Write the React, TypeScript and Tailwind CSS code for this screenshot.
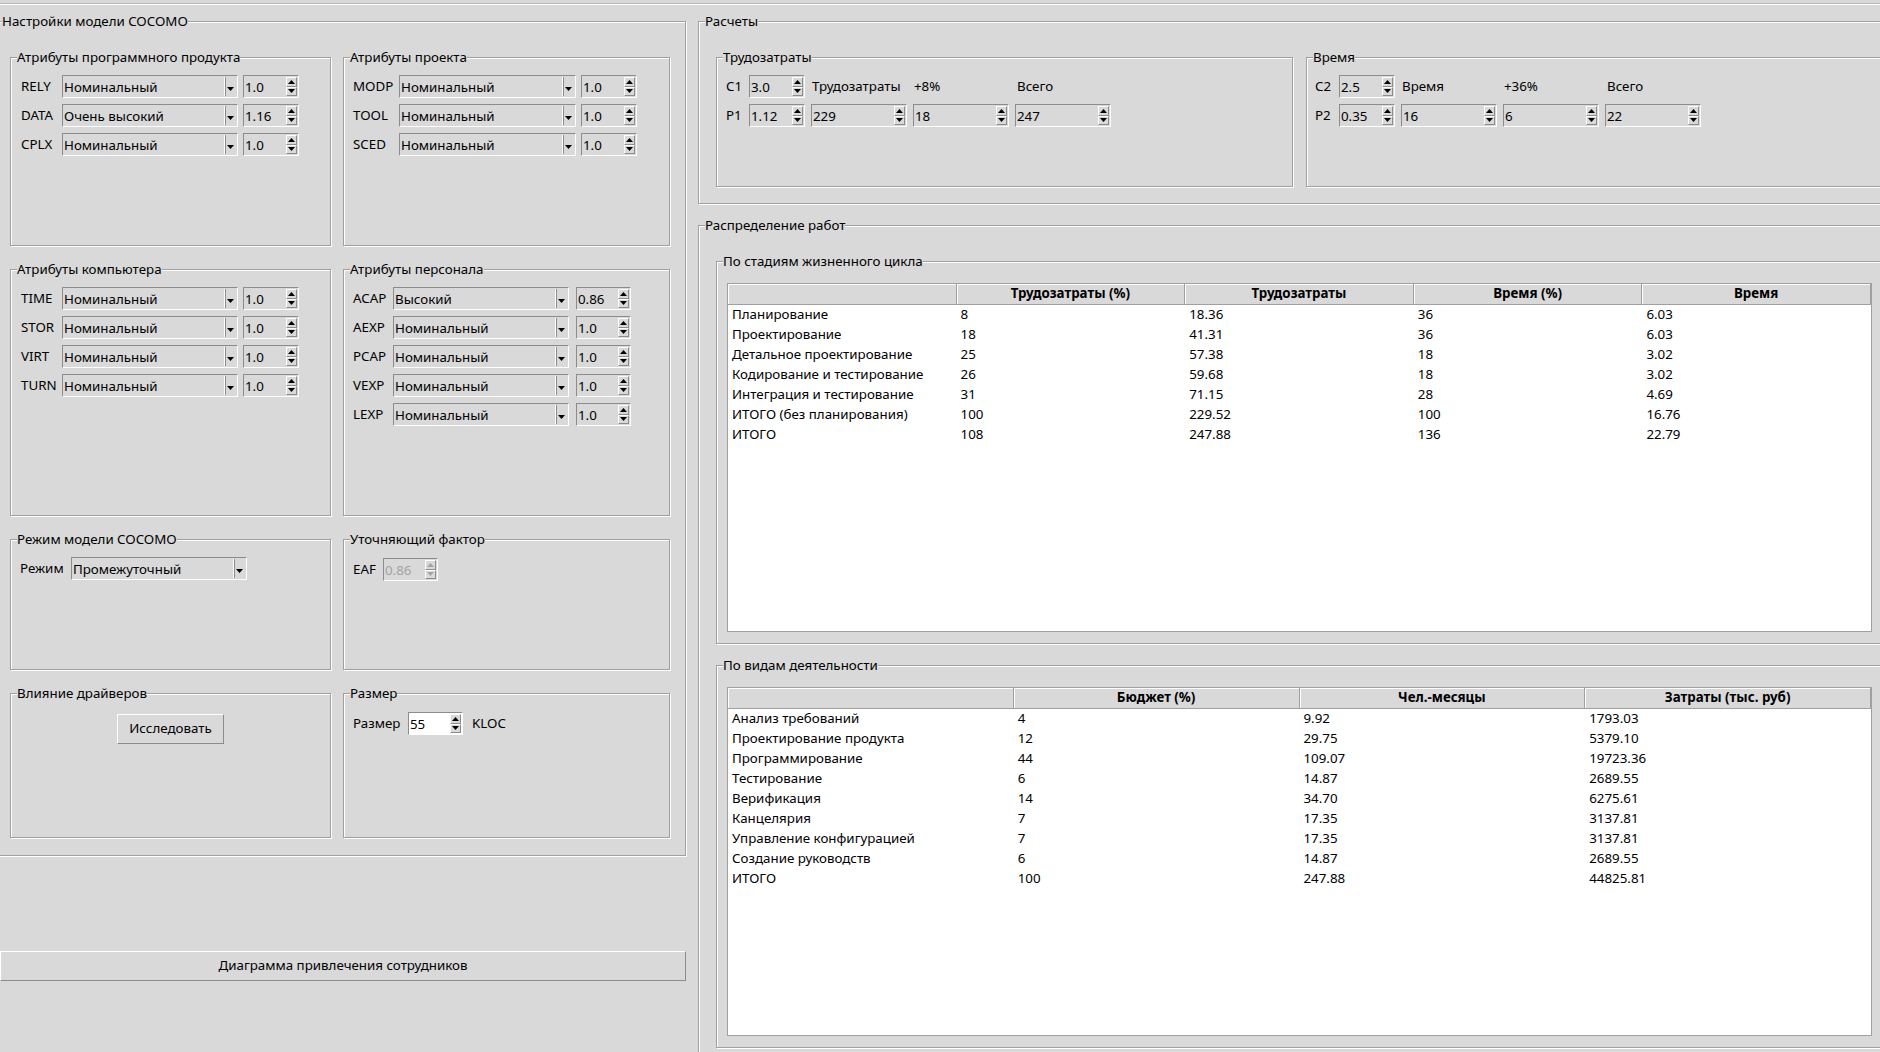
import React from 'react';

const stageRows = [
  ['Планирование', '8', '18.36', '36', '6.03'],
  ['Проектирование', '18', '41.31', '36', '6.03'],
  ['Детальное проектирование', '25', '57.38', '18', '3.02'],
  ['Кодирование и тестирование', '26', '59.68', '18', '3.02'],
  ['Интеграция и тестирование', '31', '71.15', '28', '4.69'],
  ['ИТОГО (без планирования)', '100', '229.52', '100', '16.76'],
  ['ИТОГО', '108', '247.88', '136', '22.79'],
];

const activityRows = [
  ['Анализ требований', '4', '9.92', '1793.03'],
  ['Проектирование продукта', '12', '29.75', '5379.10'],
  ['Программирование', '44', '109.07', '19723.36'],
  ['Тестирование', '6', '14.87', '2689.55'],
  ['Верификация', '14', '34.70', '6275.61'],
  ['Канцелярия', '7', '17.35', '3137.81'],
  ['Управление конфигурацией', '7', '17.35', '3137.81'],
  ['Создание руководств', '6', '14.87', '2689.55'],
  ['ИТОГО', '100', '247.88', '44825.81'],
];

type Attr = { code: string; level: string; value: string };

const productAttrs: Attr[] = [
  { code: 'RELY', level: 'Номинальный', value: '1.0' },
  { code: 'DATA', level: 'Очень высокий', value: '1.16' },
  { code: 'CPLX', level: 'Номинальный', value: '1.0' },
];
const projectAttrs: Attr[] = [
  { code: 'MODP', level: 'Номинальный', value: '1.0' },
  { code: 'TOOL', level: 'Номинальный', value: '1.0' },
  { code: 'SCED', level: 'Номинальный', value: '1.0' },
];
const computerAttrs: Attr[] = [
  { code: 'TIME', level: 'Номинальный', value: '1.0' },
  { code: 'STOR', level: 'Номинальный', value: '1.0' },
  { code: 'VIRT', level: 'Номинальный', value: '1.0' },
  { code: 'TURN', level: 'Номинальный', value: '1.0' },
];
const staffAttrs: Attr[] = [
  { code: 'ACAP', level: 'Высокий', value: '0.86' },
  { code: 'AEXP', level: 'Номинальный', value: '1.0' },
  { code: 'PCAP', level: 'Номинальный', value: '1.0' },
  { code: 'VEXP', level: 'Номинальный', value: '1.0' },
  { code: 'LEXP', level: 'Номинальный', value: '1.0' },
];

function Group({
  title,
  className = '',
  bodyClass = '',
  children,
}: {
  title: string;
  className?: string;
  bodyClass?: string;
  children?: React.ReactNode;
}) {
  return (
    <fieldset
      className={`min-w-0 shrink-0 border border-[#a0a0a0] shadow-[inset_1px_1px_0_#fff,1px_1px_0_#fff] ${className}`}
    >
      <legend className="ml-[6px] bg-[#d9d9d9] leading-[18px]">{title}</legend>
      <div className={bodyClass}>{children}</div>
    </fieldset>
  );
}

function Combo({ value, width }: { value: string; width: string }) {
  return (
    <div
      className={`flex h-[23px] shrink-0 border border-t-[#8c8c8c] border-l-[#8c8c8c] border-b-white border-r-white bg-[#d9d9d9] ${width}`}
    >
      <span className="flex-1 truncate pl-[1px] leading-[22px]">{value}</span>
      <div className="my-[1px] mr-[1px] flex w-[12px] items-end justify-center border-l border-white shadow-[1px_0_0_#8c8c8c_inset] pb-[5px]">
        <svg width="7" height="4" viewBox="0 0 7 4">
          <path d="M0 0h7L3.5 4z" fill="#000" />
        </svg>
      </div>
    </div>
  );
}

function Spin({
  value,
  width,
  white = false,
  disabled = false,
}: {
  value: string;
  width: string;
  white?: boolean;
  disabled?: boolean;
}) {
  const fill = disabled ? '#a3a3a3' : '#000';
  return (
    <div
      className={`flex h-[23px] shrink-0 border border-t-[#8c8c8c] border-l-[#8c8c8c] border-b-white border-r-white ${
        white ? 'bg-white' : 'bg-[#d9d9d9]'
      } ${width}`}
    >
      <span className={`flex-1 pl-[1px] leading-[22px] ${disabled ? 'text-[#a3a3a3]' : ''}`}>{value}</span>
      <div className="my-[1px] mr-[1px] flex w-[11px] flex-col bg-[#d9d9d9]">
        <div className="flex flex-1 items-center justify-center border border-t-white border-l-white border-r-[#8c8c8c] border-b-[#8c8c8c]">
          <svg width="7" height="4" viewBox="0 0 7 4">
            <path d="M0 4h7L3.5 0z" fill={fill} />
          </svg>
        </div>
        <div className="flex flex-1 items-center justify-center border border-t-white border-l-white border-r-[#8c8c8c] border-b-[#8c8c8c]">
          <svg width="7" height="4" viewBox="0 0 7 4">
            <path d="M0 0h7L3.5 4z" fill={fill} />
          </svg>
        </div>
      </div>
    </div>
  );
}

function AttrRows({
  rows,
  labelW,
  comboW,
  spinGap,
  spinW,
}: {
  rows: Attr[];
  labelW: string;
  comboW: string;
  spinGap: string;
  spinW: string;
}) {
  return (
    <div className="flex flex-col gap-[6px]">
      {rows.map((r) => (
        <div key={r.code} className="flex items-center">
          <span className={`shrink-0 ${labelW}`}>{r.code}</span>
          <Combo value={r.level} width={comboW} />
          <div className={spinGap}>
            <Spin value={r.value} width={spinW} />
          </div>
        </div>
      ))}
    </div>
  );
}

function Table({ cols, rows }: { cols: string[]; rows: string[][] }) {
  const grid = cols.length === 5 ? 'grid-cols-5' : 'grid-cols-4';
  return (
    <div className="h-[349px] w-[1145px] overflow-hidden border border-[#a0a0a0] bg-white">
      <div className={`grid h-[21px] ${grid}`}>
        {cols.map((c, i) => (
          <div
            key={i}
            className="border-b border-r border-[#a0a0a0] bg-[#d9d9d9] text-center font-bold leading-[19px] shadow-[inset_1px_1px_0_#fff]"
          >
            {c}
          </div>
        ))}
      </div>
      {rows.map((r, i) => (
        <div key={i} className={`grid h-[20px] ${grid}`}>
          {r.map((c, j) => (
            <div key={j} className="pl-[4px] leading-[19px]">
              {c}
            </div>
          ))}
        </div>
      ))}
    </div>
  );
}

function CalcRows({
  c,
  cVal,
  p,
  pVal,
  labelW,
  head,
  extra,
  values,
}: {
  c: string;
  cVal: string;
  p: string;
  pVal: string;
  labelW: string;
  head: string;
  extra: string;
  values: string[];
}) {
  return (
    <div className="flex flex-col gap-[6px]">
      <div className="flex items-center">
        <span className={`shrink-0 ${labelW}`}>{c}</span>
        <Spin value={cVal} width="w-[56px]" />
        <span className="ml-[6px] w-[96px] pl-[1px]">{head}</span>
        <span className="ml-[6px] w-[96px] pl-[1px]">{extra}</span>
        <span className="ml-[6px] w-[96px] pl-[2px]">Всего</span>
      </div>
      <div className="flex items-center">
        <span className={`shrink-0 ${labelW}`}>{p}</span>
        <Spin value={pVal} width="w-[56px]" />
        {values.map((v, i) => (
          <div key={i} className="ml-[6px]">
            <Spin value={v} width="w-[96px]" />
          </div>
        ))}
      </div>
    </div>
  );
}

export default function App() {
  return (
    <div className="h-[1052px] w-[1880px] overflow-hidden bg-[#d9d9d9] font-['Noto_Sans','DejaVu_Sans',sans-serif] text-[13.33px] text-black">
      <div className="h-[4px] border-b border-[#b8b8b8] shadow-[0_1px_0_#fff]" />
      <div className="flex">
        {/* left: model settings */}
        <div className="-ml-[5px] w-[691px] shrink-0">
          <Group
            title="Настройки модели COCOMO"
            className="mt-[8px] h-[844px]"
            bodyClass="grid grid-cols-[321px_327px] grid-rows-[198px_256px_140px_154px] gap-x-[12px] gap-y-[14px] pl-[14px] pt-[18px]"
          >
            <Group title="Атрибуты программного продукта" bodyClass="pl-[10px] pt-[9px]">
              <AttrRows rows={productAttrs} labelW="w-[41px]" comboW="w-[176px]" spinGap="ml-[5px]" spinW="w-[56px]" />
            </Group>
            <Group title="Атрибуты проекта" bodyClass="pl-[9px] pt-[9px]">
              <AttrRows rows={projectAttrs} labelW="w-[46px]" comboW="w-[177px]" spinGap="ml-[5px]" spinW="w-[56px]" />
            </Group>
            <Group title="Атрибуты компьютера" bodyClass="pl-[10px] pt-[9px]">
              <AttrRows rows={computerAttrs} labelW="w-[41px]" comboW="w-[176px]" spinGap="ml-[5px]" spinW="w-[56px]" />
            </Group>
            <Group title="Атрибуты персонала" bodyClass="pl-[9px] pt-[9px]">
              <AttrRows rows={staffAttrs} labelW="w-[40px]" comboW="w-[176px]" spinGap="ml-[7px]" spinW="w-[55px]" />
            </Group>
            <Group title="Режим модели COCOMO" bodyClass="pl-[9px] pt-[9px]">
              <div className="flex items-center">
                <span className="w-[51px] shrink-0">Режим</span>
                <Combo value="Промежуточный" width="w-[176px]" />
              </div>
            </Group>
            <Group title="Уточняющий фактор" bodyClass="pl-[9px] pt-[10px]">
              <div className="flex items-center">
                <span className="w-[30px] shrink-0">EAF</span>
                <Spin value="0.86" width="w-[55px]" disabled />
              </div>
            </Group>
            <Group title="Влияние драйверов" bodyClass="flex justify-center pt-[12px]">
              <button className="h-[30px] w-[107px] border border-b-[#8c8c8c] border-l-white border-r-[#8c8c8c] border-t-white bg-[#d9d9d9]">
                Исследовать
              </button>
            </Group>
            <Group title="Размер" bodyClass="pl-[9px] pt-[10px]">
              <div className="flex items-center">
                <span className="w-[55px] shrink-0">Размер</span>
                <Spin value="55" width="w-[55px]" white />
                <span className="ml-[9px]">KLOC</span>
              </div>
            </Group>
          </Group>
          <button className="ml-[5px] mt-[95px] h-[30px] w-[686px] border border-b-[#8c8c8c] border-l-white border-r-[#8c8c8c] border-t-white bg-[#d9d9d9]">
            Диаграмма привлечения сотрудников
          </button>
        </div>

        {/* right: calculations */}
        <div className="ml-[12px] w-[1203px] shrink-0">
          <Group title="Расчеты" className="mt-[8px] h-[192px]" bodyClass="flex gap-[13px] pl-[17px] pt-[18px]">
            <Group title="Трудозатраты" className="h-[139px] w-[577px]" bodyClass="pl-[9px] pt-[9px]">
              <CalcRows
                c="C1"
                cVal="3.0"
                p="P1"
                pVal="1.12"
                labelW="w-[23px]"
                head="Трудозатраты"
                extra="+8%"
                values={['229', '18', '247']}
              />
            </Group>
            <Group title="Время" className="h-[139px] w-[577px]" bodyClass="pl-[8px] pt-[9px]">
              <CalcRows
                c="C2"
                cVal="2.5"
                p="P2"
                pVal="0.35"
                labelW="w-[24px]"
                head="Время"
                extra="+36%"
                values={['16', '6', '22']}
              />
            </Group>
          </Group>
          <Group
            title="Распределение работ"
            className="mt-[12px] h-[900px]"
            bodyClass="flex flex-col gap-[12px] pl-[17px] pt-[18px]"
          >
            <Group title="По стадиям жизненного цикла" className="h-[392px] w-[1167px]" bodyClass="pl-[10px] pt-[13px]">
              <Table cols={['', 'Трудозатраты (%)', 'Трудозатраты', 'Время (%)', 'Время']} rows={stageRows} />
            </Group>
            <Group title="По видам деятельности" className="h-[392px] w-[1167px]" bodyClass="pl-[10px] pt-[13px]">
              <Table cols={['', 'Бюджет (%)', 'Чел.-месяцы', 'Затраты (тыс. руб)']} rows={activityRows} />
            </Group>
          </Group>
        </div>
      </div>
    </div>
  );
}
